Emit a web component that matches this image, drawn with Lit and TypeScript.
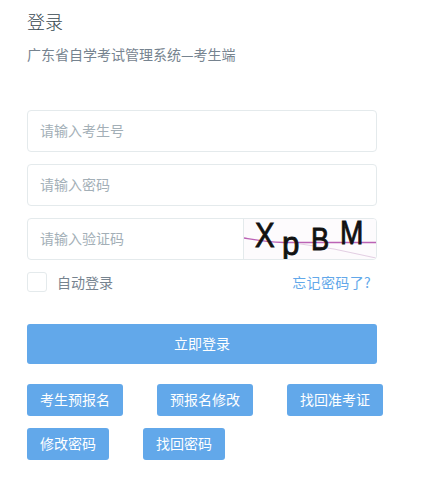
import { LitElement, html, css, svg } from "lit";
import { customElement } from "lit/decorators.js";

@customElement("app-root")
export class AppRoot extends LitElement {
  static styles = css`
    :host {
      display: block;
      width: 442px;
      height: 478px;
      background: #fff;
      font-family: "Noto Sans CJK SC", "Noto Sans", sans-serif;
      box-sizing: border-box;
      padding: 9px 0 0 27px;
      overflow: hidden;
    }
    .title { font-size: 18px; line-height: 24px; color: #37474f; font-weight: 300; }
    .sub { margin-top: 11px; font-size: 14px; line-height: 20px; color: #76838f; }
    .form { width: 350px; margin-top: 46px; display: flex; flex-direction: column; gap: 12px; }
    .field {
      height: 42px; box-sizing: border-box; border: 1px solid #e4eaec; border-radius: 4px;
      display: flex; align-items: center; padding: 0 0 2px 12px; font-size: 14px; color: #a3afb7;
    }
    .captcha-field { padding: 0; overflow: hidden; }
    .captcha-field .ph { flex: 1; padding: 0 0 2px 12px; }
    .captcha { width: 132px; height: 40px; display: block; border-left: 1px solid #e4eaec; flex: none; }
    .cap-letter { font-family: "Liberation Sans", sans-serif; fill: #111; stroke: #111; stroke-width: 0.9; }
    .row { height: 20px; display: flex; align-items: center; font-size: 14px; }
    .check { width: 20px; height: 20px; box-sizing: border-box; border: 1px solid #e4eaec; border-radius: 3px; }
    .auto { margin-left: 10px; color: #76838f; }
    .forgot { margin-left: auto; margin-right: 6px; color: #62a8ea; letter-spacing: 0.35px; }
    .login {
      margin-top: 20px; height: 40px; background: #62a8ea; color: #fff; border-radius: 3px;
      display: flex; align-items: center; justify-content: center; font-size: 14px; padding-bottom: 2px; box-sizing: border-box;
    }
    .links { margin-top: 20px; display: flex; flex-direction: column; gap: 12px; }
    .links-row { display: flex; gap: 34px; }
    .btn {
      height: 32px; padding: 0 13px 2px; box-sizing: border-box; background: #62a8ea; color: #fff; border-radius: 3px;
      display: flex; align-items: center; font-size: 14px;
    }
  `;

  private captcha() {
    return svg`
      <svg class="captcha" viewBox="0 0 132 40" xmlns="http://www.w3.org/2000/svg">
        <rect width="132" height="40" fill="#fdfbfd"/>
        <path d="M0 19 C 12 21 22 23 40 23.5 L 132 23.5" stroke="#bb62b5" stroke-width="1.4" fill="none"/>
        <path d="M50 24 L 90 30 L 132 39" stroke="#e3cfe3" stroke-width="1.2" fill="none"/>
        <text class="cap-letter" transform="translate(11 28) scale(.84 1)" font-size="35">X</text>
        <text class="cap-letter" transform="translate(38 36) scale(.92 1)" font-size="34">p</text>
        <text class="cap-letter" transform="translate(67 31) scale(.85 1)" font-size="32">B</text>
        <text class="cap-letter" transform="translate(96 25) scale(.85 1)" font-size="33">M</text>
      </svg>`;
  }

  render() {
    return html`
      <div class="title">登录</div>
      <div class="sub">广东省自学考试管理系统—考生端</div>
      <div class="form">
        <div class="field">请输入考生号</div>
        <div class="field">请输入密码</div>
        <div class="field captcha-field"><span class="ph">请输入验证码</span>${this.captcha()}</div>
        <div class="row">
          <span class="check"></span><span class="auto">自动登录</span><span class="forgot">忘记密码了?</span>
        </div>
        <div class="login">立即登录</div>
      </div>
      <div class="links">
        <div class="links-row">
          <span class="btn">考生预报名</span><span class="btn">预报名修改</span><span class="btn">找回准考证</span>
        </div>
        <div class="links-row">
          <span class="btn">修改密码</span><span class="btn">找回密码</span>
        </div>
      </div>
    `;
  }
}
